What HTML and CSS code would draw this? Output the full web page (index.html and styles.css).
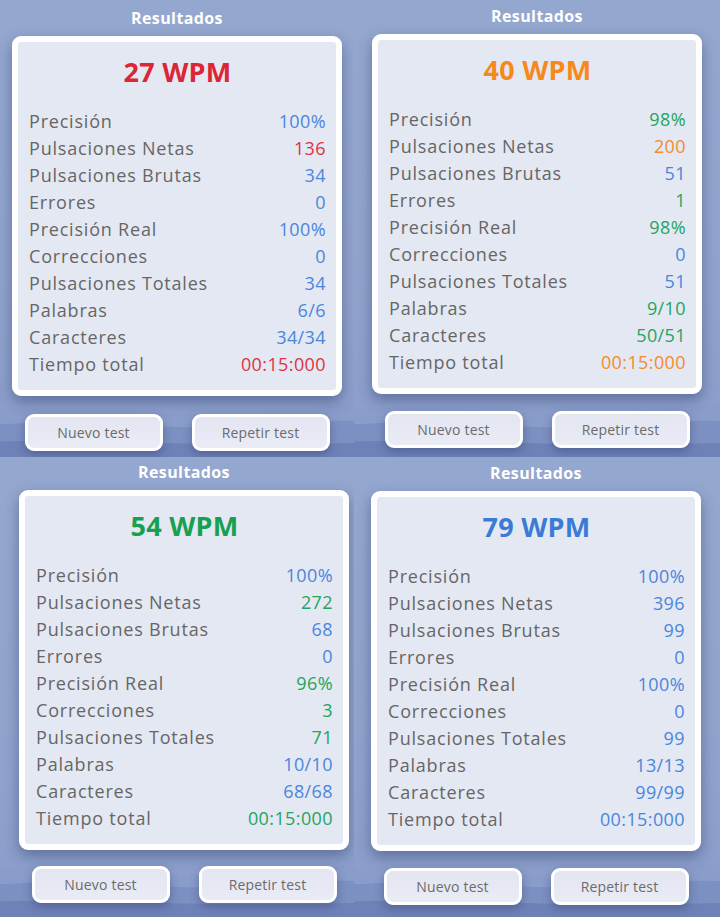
FILE: index.html
```html
<!DOCTYPE html>
<html lang="es">
<head>
  <meta charset="UTF-8">
  <title>Resultados</title>
  <link rel="stylesheet" href="styles.css">
</head>
<body>

  <div class="grid" id="grid"></div>

  <script>
    const grid = document.getElementById('grid');

    const labels = [
      "Precisión", "Pulsaciones Netas", "Pulsaciones Brutas", "Errores",
      "Precisión Real", "Correcciones", "Pulsaciones Totales", "Palabras",
      "Caracteres", "Tiempo total"
    ];

    // one entry per screenshot: wpm colour, then [value, colour] for each row
    const results = [
      { pos: "tl", wpm: 27, color: "red", rows: [
        ["100%", "blue"], ["136", "red"], ["34", "blue"], ["0", "blue"], ["100%", "blue"],
        ["0", "blue"], ["34", "blue"], ["6/6", "blue"], ["34/34", "blue"], ["00:15:000", "red"]
      ]},
      { pos: "tr", wpm: 40, color: "orange", rows: [
        ["98%", "green"], ["200", "orange"], ["51", "blue"], ["1", "green"], ["98%", "green"],
        ["0", "blue"], ["51", "blue"], ["9/10", "green"], ["50/51", "green"], ["00:15:000", "orange"]
      ]},
      { pos: "bl", wpm: 54, color: "green", rows: [
        ["100%", "blue"], ["272", "green"], ["68", "blue"], ["0", "blue"], ["96%", "green"],
        ["3", "green"], ["71", "green"], ["10/10", "blue"], ["68/68", "blue"], ["00:15:000", "green"]
      ]},
      { pos: "br", wpm: 79, color: "blue", rows: [
        ["100%", "blue"], ["396", "blue"], ["99", "blue"], ["0", "blue"], ["100%", "blue"],
        ["0", "blue"], ["99", "blue"], ["13/13", "blue"], ["99/99", "blue"], ["00:15:000", "blue"]
      ]}
    ];

    const wave = `
      <svg class="waves" viewBox="0 0 360 90" preserveAspectRatio="none">
        <path d="M0 30 C 80 20, 160 40, 240 34 C 300 30, 340 22, 360 24 L360 90 L0 90 Z" fill="#8a9cca"/>
        <path d="M0 48 C 90 40, 170 58, 260 50 C 310 46, 340 42, 360 44 L360 90 L0 90 Z" fill="#7d90c2"/>
        <path d="M0 70 C 100 66, 200 78, 360 72 L360 90 L0 90 Z" fill="#6f82b8"/>
      </svg>`;

    results.forEach(r => {
      const panel = document.createElement('div');
      panel.className = `panel panel-${r.pos}`;

      const rows = r.rows.map((v, i) =>
        `<div class="row"><span class="label">${labels[i]}</span><span class="value ${v[1]}">${v[0]}</span></div>`
      ).join("");

      panel.innerHTML = `
        ${wave}
        <h2 class="title">Resultados</h2>
        <div class="card">
          <div class="wpm ${r.color}">${r.wpm} WPM</div>
          ${rows}
        </div>
        <div class="actions">
          <button class="btn">Nuevo test</button>
          <button class="btn">Repetir test</button>
        </div>`;
      grid.appendChild(panel);
    });
  </script>
</body>
</html>
```

FILE: styles.css
```css
* {
  box-sizing: border-box;
}

body {
  margin: 0;
  padding: 0;
  width: 720px;
  height: 917px;
  overflow: hidden;
  font-family: 'Open Sans', sans-serif;
  background: #8fa1cc;
}

.grid {
  display: grid;
  grid-template-columns: 354px 366px;
  grid-template-rows: 457px 460px;
}

.panel {
  position: relative;
  display: flex;
  flex-direction: column;
  align-items: center;
  overflow: hidden;
  background: linear-gradient(180deg, #94a7cf 0%, #91a3cd 60%, #8a9cca 100%);
}

.waves {
  position: absolute;
  left: 0;
  bottom: 0;
  width: 100%;
  height: 70px;
}

.panel-tl { padding-top: 8px; }
.panel-tr { padding-top: 6px; }
.panel-bl { padding-top: 5px; padding-left: 14px; }
.panel-br { padding-top: 6px; padding-right: 2px; }

.panel-tl .actions { margin-top: 18px; }
.panel-tr .actions { margin-top: 17px; }
.panel-bl .actions { margin-top: 16px; }
.panel-br .actions { margin-top: 17px; }

.title {
  position: relative;
  margin: 0;
  height: 20px;
  line-height: 20px;
  font-size: 16px;
  font-weight: 700;
  letter-spacing: 0.4px;
  color: #fff;
}

.card {
  position: relative;
  width: 330px;
  margin-top: 8px;
  padding: 14px 10px 12px 11px;
  background: #e4e8f2;
  border: 6px solid #fff;
  border-radius: 9px;
  box-shadow: 0 6px 14px rgba(40, 55, 100, 0.45);
}

.wpm {
  height: 32px;
  line-height: 32px;
  margin-bottom: 20px;
  text-align: center;
  font-size: 27px;
  font-weight: 700;
  letter-spacing: 0.3px;
}

.row {
  display: flex;
  justify-content: space-between;
  height: 27px;
  line-height: 27px;
  font-size: 18px;
  letter-spacing: 0.4px;
}

.label {
  color: #666;
  letter-spacing: 0.8px;
}

.red { color: #dd3443; }
.orange { color: #f68a2c; }
.green { color: #24a460; }
.blue { color: #4a86dd; }

.wpm.red { color: #dc2535; }
.wpm.orange { color: #f7891c; }
.wpm.green { color: #16a050; }
.wpm.blue { color: #3a7bd6; }

.actions {
  position: relative;
  display: flex;
  gap: 29px;
}

.btn {
  width: 138px;
  height: 37px;
  padding: 0;
  font-family: 'Open Sans', sans-serif;
  font-size: 14px;
  letter-spacing: 0.2px;
  color: #6b6b6b;
  background: linear-gradient(180deg, #e3e6f1, #e9ecf5);
  border: 3px solid #fff;
  border-radius: 9px;
  box-shadow: 0 4px 10px rgba(40, 55, 100, 0.4);
  cursor: pointer;
}
```
